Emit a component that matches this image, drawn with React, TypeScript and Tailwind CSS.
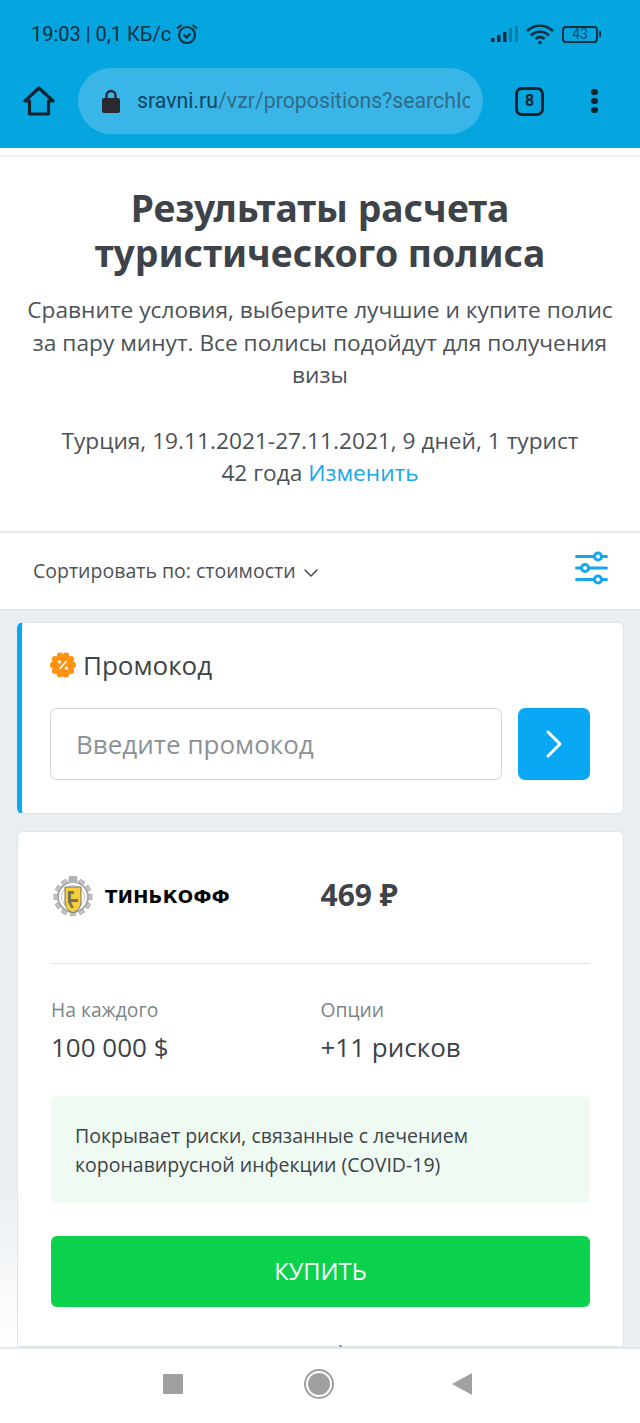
import { ChevronDown, ChevronRight } from "lucide-react";

function StatusBar() {
  return (
    <div className="h-[54px] flex items-center justify-between pl-[31px] pr-[39px] pt-[14px] text-[#10303f] font-['Roboto',sans-serif]">
      <div className="flex items-center gap-[4px] text-[20px]">
        <span>19:03 | 0,1 КБ/с</span>
        <svg width="24" height="24" viewBox="0 0 24 24" fill="none" stroke="#10303f" strokeWidth="2.200">
          <circle cx="12" cy="13" r="8" />
          <path d="M8.500 12.500l3 3 4-4M2 6.500 6.500 3M22 6.500 17.500 3" />
        </svg>
      </div>
      <div className="flex items-center">
        <svg width="30" height="18" viewBox="0 0 30 18" fill="#10303f">
          <rect x="1" y="13" width="3.500" height="4" />
          <rect x="7" y="10" width="3.500" height="7" />
          <rect x="13" y="7" width="3.500" height="10" />
          <rect x="19" y="3" width="3" height="14" opacity="0.35" />
          <rect x="25" y="1" width="3" height="16" opacity="0.35" />
        </svg>
        <svg className="ml-[6px]" width="28" height="22" viewBox="0 0 28 22" fill="none" stroke="#10303f" strokeWidth="2.600">
          <path d="M1 8c7-7 19-7 26 0M5 12.500c5-5 13-5 18 0M9.500 16c2.500-2.500 6.500-2.500 9 0" />
          <circle cx="14" cy="19.500" r="1.800" fill="#10303f" stroke="none" />
        </svg>
        <div className="ml-[8px] flex items-center">
          <div className="w-[36px] h-[17px] border-2 border-[#10303f] rounded-[4px] flex items-center justify-center text-[14px] leading-none text-[#0f4f6e]">43</div>
          <div className="w-[2px] h-[6px] bg-[#10303f] ml-[1px]" />
        </div>
      </div>
    </div>
  );
}

function BrowserBar() {
  return (
    <div className="h-[94px] flex items-center font-['Roboto',sans-serif]">
      <div className="w-[78px] flex justify-center">
        <svg width="32" height="32" viewBox="0 0 32 32" fill="none" stroke="#10242e" strokeWidth="3.200" strokeLinejoin="round" strokeLinecap="round">
          <path d="M2 16 16 3l14 13h-4.500v13h-19V16z" />
        </svg>
      </div>
      <div className="w-[405px] h-[66px] rounded-[33px] bg-[#3ab5e8] flex items-center pl-[24px] overflow-hidden">
        <svg width="18" height="24" viewBox="0 0 18 24" fill="#2a2a2e">
          <rect x="0" y="9" width="18" height="15" rx="2" />
          <path d="M4.500 10V6.500a4.500 4.500 0 0 1 9 0V10" fill="none" stroke="#2a2a2e" strokeWidth="2.400" />
        </svg>
        <span className="ml-[17px] text-[21.300px] text-[#2f6c88] whitespace-nowrap overflow-hidden w-[333px]">
          <span className="text-[#0f4560]">sravni.ru</span>/vzr/propositions?searchIc
        </span>
      </div>
      <div className="ml-[32px] w-[29px] h-[29px] border-[3px] border-[#10242e] rounded-[7px] flex items-center justify-center text-[16px] font-bold text-[#10242e]">8</div>
      <div className="ml-[47px] flex flex-col gap-[2.500px]">
        <div className="w-[6.500px] h-[6.500px] rounded-full bg-[#10242e]" />
        <div className="w-[6.500px] h-[6.500px] rounded-full bg-[#10242e]" />
        <div className="w-[6.500px] h-[6.500px] rounded-full bg-[#10242e]" />
      </div>
    </div>
  );
}

function Intro() {
  return (
    <section className="bg-white h-[374px] pt-[28px] text-center flex flex-col">
      <h1 className="text-[37.300px] leading-[45px] font-bold text-[#3d4348] font-['Noto_Sans',sans-serif]">
        Результаты расчета<br />туристического полиса
      </h1>
      <p className="mt-[19px] px-[20px] text-[22.700px] leading-[32.500px] text-[#4b5257]">
        Сравните условия, выберите лучшие и купите полис за пару минут. Все полисы подойдут для получения визы
      </p>
      <p className="mt-[33px] text-[22.700px] leading-[32.500px] text-[#4b5257]">
        Турция, 19.11.2021-27.11.2021, 9 дней, 1 турист<br />
        42 года <span className="text-[#18a7ea]">Изменить</span>
      </p>
    </section>
  );
}

function SortBar() {
  return (
    <div className="h-[80px] bg-white border-t-2 border-b-2 border-[#e4e8ec] flex items-center justify-between pl-[33px] pr-[32px]">
      <div className="flex items-center gap-[3px] text-[19.500px] text-[#4b5257]">
        Сортировать по: стоимости
        <ChevronDown size={24} strokeWidth={1.600} className="mt-[4px]" />
      </div>
      <svg className="mb-[6px]" width="33" height="34" viewBox="0 0 33 34" fill="none" stroke="#18a7ea" strokeWidth="3" strokeLinecap="round">
        <path d="M1.500 5.500h30M1.500 17h30M1.500 28.500h30" />
        <circle cx="23" cy="5.500" r="3.600" fill="#fff" />
        <circle cx="10" cy="17" r="3.600" fill="#fff" />
        <circle cx="23" cy="28.500" r="3.600" fill="#fff" />
      </svg>
    </div>
  );
}

const bumps = [0, 36, 72, 108, 144, 180, 216, 252, 288, 324];

function PromoBadge() {
  // scalloped orange badge with a percent sign
  return (
    <svg width="26" height="26" viewBox="0 0 26 26">
      <g fill="#ff9211">
        <circle cx="13" cy="13" r="10.500" />
        {bumps.map((deg) => (
          <circle
            key={deg}
            cx={13 + 9.8 * Math.cos((deg * Math.PI) / 180)}
            cy={13 + 9.8 * Math.sin((deg * Math.PI) / 180)}
            r="3.200"
          />
        ))}
      </g>
      <path d="M16.500 9l-7 8" stroke="#fff" strokeWidth="1.600" />
      <circle cx="9.500" cy="9.800" r="1.600" fill="#fff" />
      <circle cx="16.500" cy="16.200" r="1.600" fill="#fff" />
    </svg>
  );
}

function PromoCard() {
  return (
    <div className="bg-white rounded-[6px] border border-[#dde3e8] border-l-[5px] border-l-[#0aa7f5] h-[192px] pl-[28px] pr-[33px] pt-[26px]">
      <div className="flex items-center gap-[7px] text-[26px] leading-[32px] text-[#3d4348]">
        <PromoBadge />
        Промокод
      </div>
      <div className="mt-[27px] flex gap-[16px]">
        <div className="flex-1 h-[72px] border-[1.500px] border-[#d2d5d8] rounded-[7px] flex items-center pl-[25px] text-[26px] text-[#8b9297]">Введите промокод</div>
        <div className="w-[72px] h-[72px] rounded-[7px] bg-[#0aa7f5] flex items-center justify-center text-white">
          <ChevronRight size={48} strokeWidth={1.500} />
        </div>
      </div>
    </div>
  );
}

const teeth = [0, 30, 60, 90, 120, 150, 180, 210, 240, 270, 300, 330];

function TinkoffCrest() {
  return (
    <svg width="44" height="40" viewBox="0 0 44 40" className="mt-[2px]">
      {teeth.map((deg) => (
        <rect key={deg} x="19.500" y="2" width="5" height="6" fill="#c4c6c8" stroke="#8d9092" strokeWidth="0.600" transform={`rotate(${deg} 22 21)`} />
      ))}
      <circle cx="22" cy="21" r="15" fill="#fff" stroke="#a5a8aa" strokeWidth="2" />
      <circle cx="22" cy="21" r="11.500" fill="#fff" stroke="#c4c6c8" strokeWidth="1" />
      <path d="M18 0h8l1 7H17z" fill="#b0b3b5" />
      <path d="M14 11h16v15c0 6-4 9-8 11-4-2-8-5-8-11z" fill="#f3cf3f" stroke="#77735c" strokeWidth="1" />
      <path d="M17 15h6v3h-3v5h7v3h-7l3 6h-3l-3-6z" fill="#7a7350" />
    </svg>
  );
}

function OfferCard() {
  return (
    <div className="mt-[17px] bg-white rounded-t-[6px] border border-[#dde3e8] pl-[33px] pr-[33px] flex-1">
      <div className="h-[132px] grid grid-cols-2 items-center border-b border-[#dde3e8] pb-[6px]">
        <div className="flex items-center gap-[10px]">
          <TinkoffCrest />
          <span className="mt-[4px] text-[18px] font-bold tracking-[0.400px] text-black font-['DejaVu_Sans',sans-serif]">ТИНЬКОФФ</span>
        </div>
        <div className="text-[30px] leading-[36px] font-bold text-[#3d4348] font-['Noto_Sans',sans-serif]">469 ₽</div>
      </div>
      <div className="grid grid-cols-2 mt-[33px]">
        <div>
          <div className="text-[19.300px] leading-[26px] text-[#7d858a]">На каждого</div>
          <div className="mt-[7px] text-[26px] leading-[34px] text-[#3d4348]">100 000 $</div>
        </div>
        <div>
          <div className="text-[19.300px] leading-[26px] text-[#7d858a]">Опции</div>
          <div className="mt-[7px] text-[26px] leading-[34px] text-[#3d4348]">+11 рисков</div>
        </div>
      </div>
      <div className="mt-[32px] h-[107px] rounded-[6px] bg-[#effaf3] px-[24px] flex items-center text-[19.500px] leading-[29px] text-[#3d4348]">
        Покрывает риски, связанные с лечением коронавирусной инфекции (COVID-19)
      </div>
      <div className="mt-[33px] h-[71px] rounded-[6px] bg-[#0cd14c] flex items-center justify-center text-white text-[23.700px]">КУПИТЬ</div>
    </div>
  );
}

function NavBar() {
  return (
    <div className="h-[76px] bg-white border-t-2 border-[#e4e8ec] flex items-center pl-[163px] pb-[5px]">
      <div className="w-[20px] h-[20px] bg-[#a0a0a0] rounded-[1px]" />
      <div className="ml-[121px] w-[30px] h-[30px] rounded-full border-2 border-[#a0a0a0] flex items-center justify-center">
        <div className="w-[22px] h-[22px] rounded-full bg-[#a0a0a0]" />
      </div>
      <svg className="ml-[118px]" width="20" height="24" viewBox="0 0 20 24" fill="#a0a0a0">
        <path d="M20 1v22L0 12z" />
      </svg>
    </div>
  );
}

export default function App() {
  return (
    <div className="w-[640px] h-[1423px] flex flex-col overflow-hidden bg-[#e9eef2] font-['Open_Sans',sans-serif]">
      <div className="bg-[#05a5e0] h-[148px]">
        <StatusBar />
        <BrowserBar />
      </div>
      <div className="h-[9px] bg-white border-b-2 border-[#f1f2f3]" />
      <Intro />
      <SortBar />
      <main className="relative flex-1 min-h-0 overflow-hidden pl-[17px] pr-[16px] pt-[11px] flex flex-col">
        <PromoCard />
        <OfferCard />
        {/* pale fade down the left margin, over the page background */}
        <div className="absolute left-0 bottom-0 w-[17px] h-[170px] bg-gradient-to-t from-white to-transparent" />
        <div className="absolute left-[339px] bottom-0 w-[3px] h-[2px] bg-[#9aa0a4]" />
      </main>
      <NavBar />
    </div>
  );
}
